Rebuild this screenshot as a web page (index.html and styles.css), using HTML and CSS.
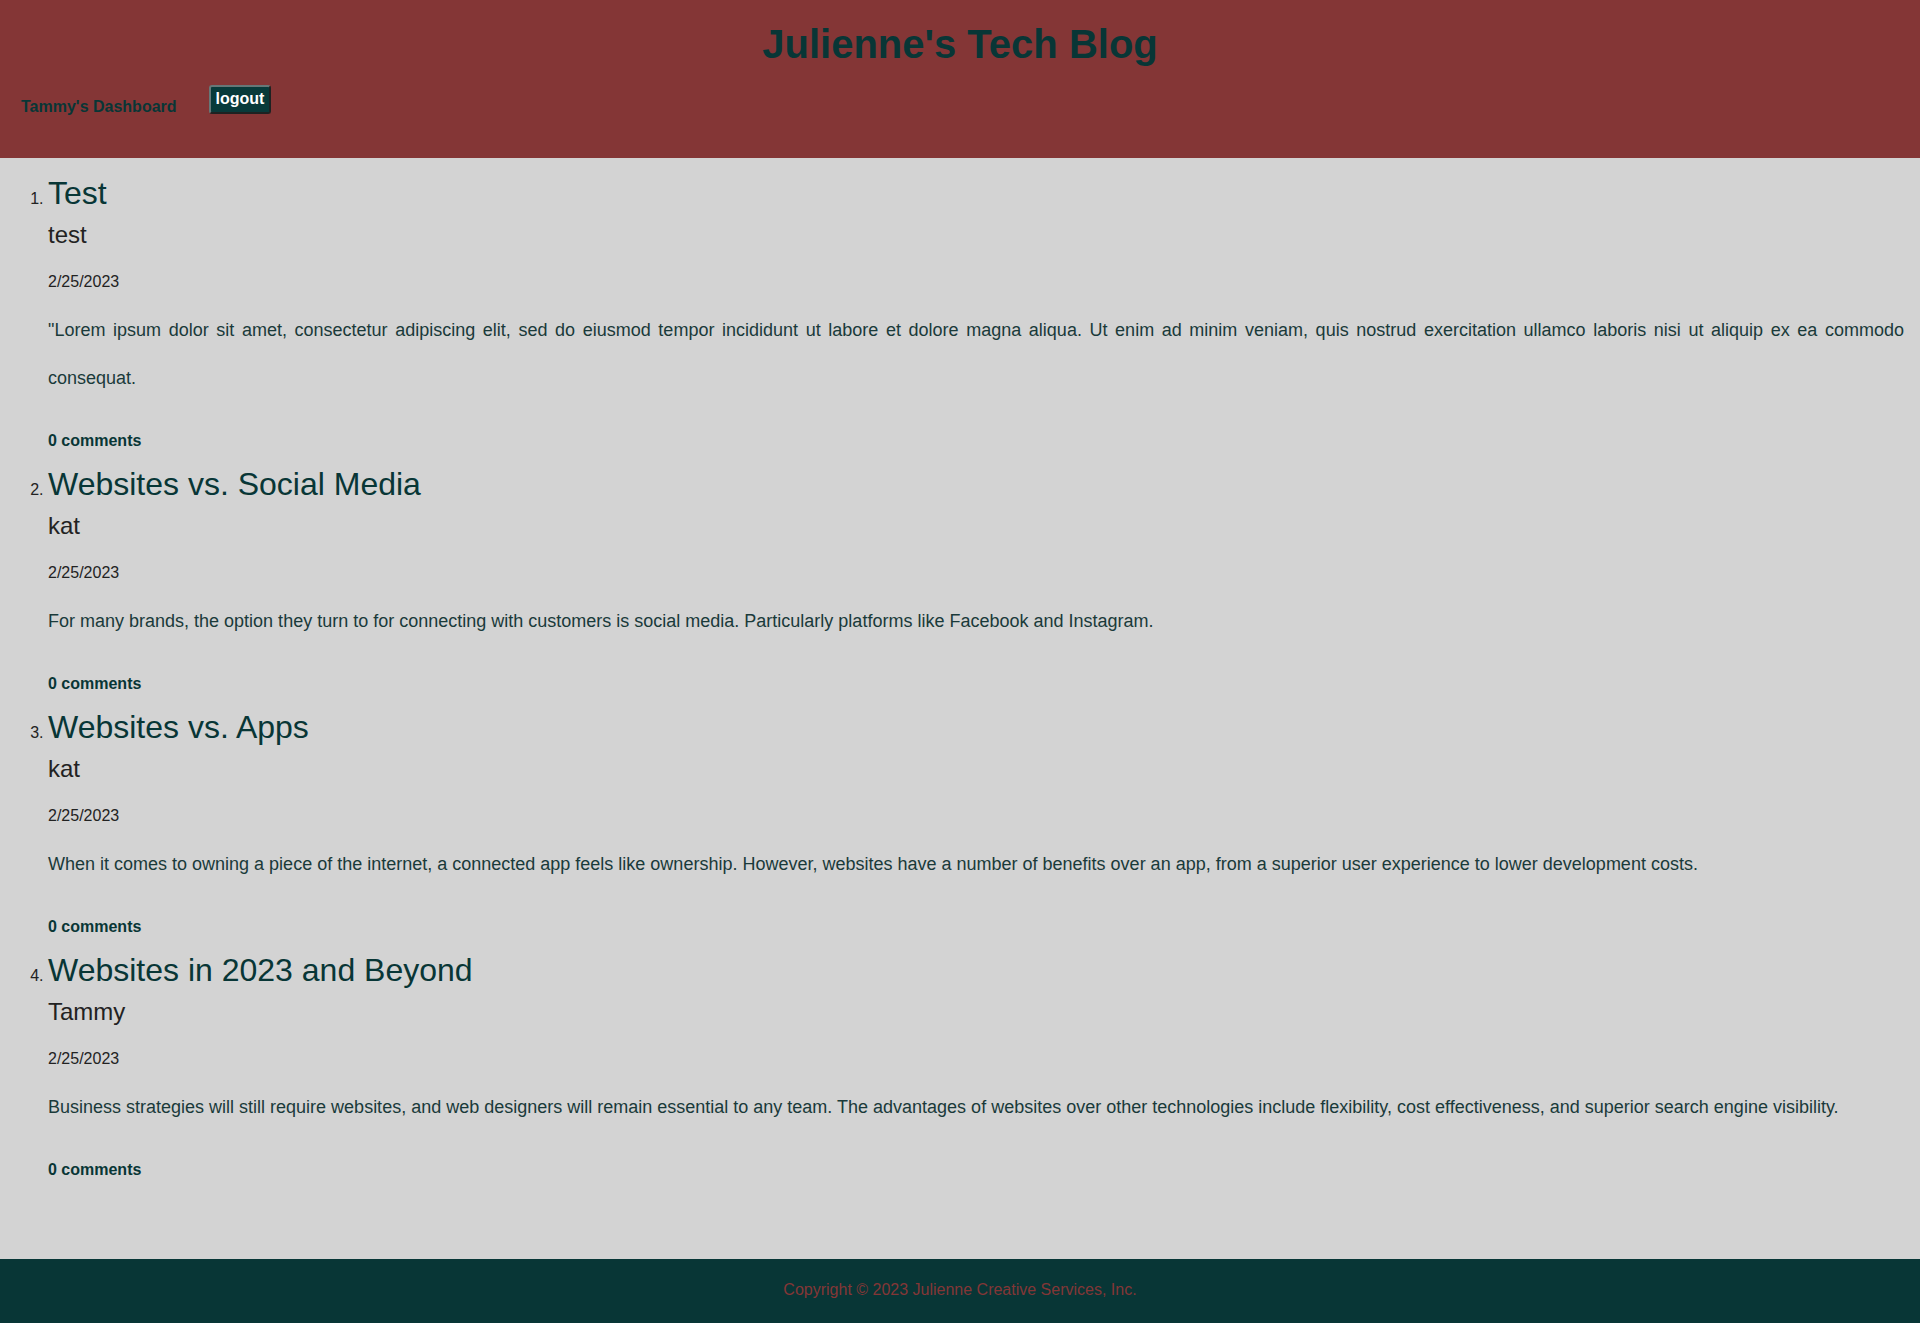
FILE: index.html
```html
<!DOCTYPE html>
<html lang="en">
<head>
  <meta charset="UTF-8" />
  <title>Julienne's Tech Blog</title>
  <meta name="viewport" content="width=device-width, initial-scale=1" />
  <link rel="stylesheet" href="styles.css">
</head>
<body>

<header class="site-header">
  <h1>Julienne's Tech Blog</h1>
  <nav class="nav">
    <a href="#" class="nav-link">Tammy's Dashboard</a>
    <button class="logout">logout</button>
  </nav>
</header>

<main class="content">
  <ol class="posts">
    <li class="post">
      <h2 class="post-title">Test</h2>
      <h3 class="post-author">test</h3>
      <p class="post-date">2/25/2023</p>
      <p class="post-body">"Lorem ipsum dolor sit amet, consectetur adipiscing elit, sed do eiusmod tempor incididunt ut labore et dolore magna aliqua. Ut enim ad minim veniam, quis nostrud exercitation ullamco laboris nisi ut aliquip ex ea commodo consequat.</p>
      <p class="post-comments">0 comments</p>
    </li>
    <li class="post">
      <h2 class="post-title">Websites vs. Social Media</h2>
      <h3 class="post-author">kat</h3>
      <p class="post-date">2/25/2023</p>
      <p class="post-body">For many brands, the option they turn to for connecting with customers is social media. Particularly platforms like Facebook and Instagram.</p>
      <p class="post-comments">0 comments</p>
    </li>
    <li class="post">
      <h2 class="post-title">Websites vs. Apps</h2>
      <h3 class="post-author">kat</h3>
      <p class="post-date">2/25/2023</p>
      <p class="post-body">When it comes to owning a piece of the internet, a connected app feels like ownership. However, websites have a number of benefits over an app, from a superior user experience to lower development costs.</p>
      <p class="post-comments">0 comments</p>
    </li>
    <li class="post">
      <h2 class="post-title">Websites in 2023 and Beyond</h2>
      <h3 class="post-author">Tammy</h3>
      <p class="post-date">2/25/2023</p>
      <p class="post-body">Business strategies will still require websites, and web designers will remain essential to any team. The advantages of websites over other technologies include flexibility, cost effectiveness, and superior search engine visibility.</p>
      <p class="post-comments">0 comments</p>
    </li>
  </ol>
</main>

<footer class="site-footer">
  Copyright &copy; 2023 Julienne Creative Services, Inc.
</footer>

</body>
</html>
```

FILE: styles.css
```css
body {
  margin: 0;
  font-family: 'Liberation Sans', Arial, sans-serif;
  background: #d3d3d3;
  color: #1a3a3a;
  min-height: 100vh;
  display: flex;
  flex-direction: column;
}
.site-header {
  background: #843636;
  padding: 21px 16px 42px;
}
.site-header h1 {
  margin: 0;
  text-align: center;
  font-size: 40px;
  line-height: 46px;
  color: #083636;
}
.nav {
  display: flex;
  align-items: flex-start;
  margin-top: 18px;
  padding-left: 5px;
}
.nav-link {
  margin-top: 13px;
  font-size: 16px;
  line-height: 18px;
  font-weight: bold;
  color: #083636;
  text-decoration: none;
}
.logout {
  margin-left: 32px;
  padding: 3px 5px 4px;
  font-family: inherit;
  font-size: 16px;
  line-height: 18px;
  font-weight: bold;
  color: #fff;
  background: #083a3a;
  border: 2px outset #667777;
  border-radius: 3px;
  cursor: pointer;
}
.content {
  flex: 1;
  padding: 15px 16px 0 8px;
}
.posts {
  margin: 0;
  padding-left: 40px;
  color: #222;
}
.post + .post {
  margin-top: 11px;
}
.post-title {
  margin: 0;
  font-size: 32px;
  line-height: 40px;
  font-weight: normal;
  color: #083636;
}
.post-author {
  margin: 2px 0 0;
  font-size: 24px;
  line-height: 40px;
  font-weight: normal;
  color: #222;
}
.post-date {
  margin: 15px 0 0;
  font-size: 16px;
  line-height: 24px;
  color: #222;
}
.post-body {
  margin: 12px 0 0;
  font-size: 18px;
  line-height: 48px;
  text-align: justify;
  color: #1a3a3a;
}
.post-comments {
  margin: 27px 0 0;
  font-size: 16px;
  line-height: 24px;
  font-weight: bold;
  color: #083636;
}
.site-footer {
  background: #083636;
  color: #843636;
  text-align: center;
  font-size: 16px;
  line-height: 18px;
  padding: 22px 0 24px;
}
```
